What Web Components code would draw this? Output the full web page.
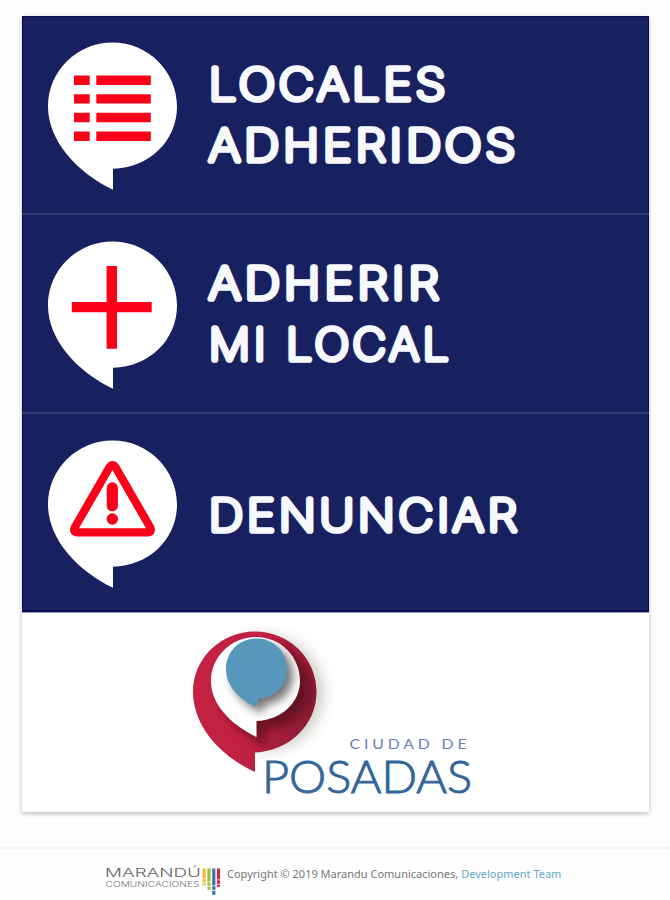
<!DOCTYPE html>
<html lang="es">
<head>
<meta charset="utf-8">
<title>Ciudad de Posadas</title>
<style>
	body {
		margin: 0;
		background: #fefefe;
		font-family: "Noto Sans", sans-serif;
	}
</style>
</head>
<body>
<main-card>
	<menu-item lines="LOCALES:2:240.5|ADHERIDOS:2:310.5">
		<svg slot="icon" width="129" height="148" viewBox="0 0 129 148" fill="#fb0019">
			<path d="M26 33.5h15.7v9.4H26zM48.3 33.5h54.5v9.4H48.3zM26 52.2h15.7v9.4H26zM48.3 52.2h54.5v9.4H48.3zM26 70.8h15.7v9.4H26zM48.3 70.8h54.5v9.4H48.3zM26 89.6h15.7v9.4H26zM48.3 89.6h54.5v9.4H48.3z"/>
		</svg>
	</menu-item>
	<menu-item lines="ADHERIR:2:234|MI LOCAL:2:243.5">
		<svg slot="icon" width="129" height="148" viewBox="0 0 129 148" fill="#fb0019">
			<path d="M58.6 25h10.4v36h34.7v10.2H69v36.5H58.6V71.2H23.8V61h34.8z"/>
		</svg>
	</menu-item>
	<menu-item lines="DENUNCIAR:2:312" last>
		<svg slot="icon" width="129" height="148" viewBox="0 0 129 148" fill="#fb0019">
			<path d="M61.3 27.5Q64.5 22.5 67.7 27.5L102 87Q104.5 92.3 99.5 92.3H29.5Q24.5 92.3 27 87Z" fill="none" stroke="#fb0019" stroke-width="8.2" stroke-linejoin="round"/>
			<rect x="58.7" y="42.3" width="11.2" height="29" rx="5.5"/>
			<circle cx="64.3" cy="79" r="5.7"/>
		</svg>
	</menu-item>
	<city-logo></city-logo>
</main-card>
<page-footer>
	<marandu-logo slot="logo"></marandu-logo>
	<span>Copyright © 2019 Marandu Comunicaciones,</span>
	<a slot="link">Development Team</a>
</page-footer>

<script>
class MainCard extends HTMLElement {
	constructor() {
		super();
		this.attachShadow({ mode: 'open' });
	}

	connectedCallback() {
		this.shadowRoot.innerHTML = `
		<style>
		:host {
			display: flex;
			flex-direction: column;
			width: 627px;
			margin: 16px 0 0 22px;
			background: #fff;
			box-shadow: 0 2px 4px rgba(0, 0, 0, .2), 0 1px 7px rgba(0, 0, 0, .07);
		}
		</style>
		<slot></slot>
		`;
	}
}

class MenuItem extends HTMLElement {
	constructor() {
		super();
		this.attachShadow({ mode: 'open' });
	}

	connectedCallback() {
		this.render();
	}

	// each line is "text:left:width"
	renderLines() {
		const lines = this.getAttribute('lines').split('|');
		const first = lines.length === 1 ? 117 : 83.5;
		return lines.map((line, i) => {
			const [text, left, width] = line.split(':');
			return `<text x="${left}" y="${first + i * 61}" textLength="${width}" lengthAdjust="spacingAndGlyphs">${text}</text>`;
		}).join('');
	}

	render() {
		this.shadowRoot.innerHTML = `
		<style>
		:host {
			display: flex;
			box-sizing: border-box;
			height: 199px;
			padding: 26px 0 0 26px;
			gap: 30px;
			background: #18215f;
			border-bottom: 2px solid #303b72;
			box-shadow: inset 1px 0 #080c54, inset -1px 0 #080c54;
		}
		:host(:first-child) {
			box-shadow: inset 1px 0 #080c54, inset -1px 0 #080c54, inset 0 1px #080c54;
		}
		:host([last]) {
			border-bottom: 1px solid #9ba0c0;
			box-shadow: inset 1px 0 #080c54, inset -1px 0 #080c54, inset 0 -2px #080c54;
		}
		.icon {
			display: grid;
			width: 129px;
			height: 148px;
		}
		.bubble,
		::slotted(svg) {
			grid-area: 1 / 1;
		}
		.label {
			margin-top: -26px;
			font-family: Inter, "Liberation Sans", sans-serif;
			font-size: 43px;
			font-weight: 100;
			letter-spacing: 3.8px;
			fill: #f8f9ff;
			stroke: #f8f9ff;
			stroke-width: 5.7px;
			stroke-linejoin: round;
			overflow: visible;
		}
		</style>
		<div class="icon">
			<svg class="bubble" width="129" height="148" viewBox="0 0 129 148">
				<path fill="#fff" d="M64.5 .5C100 .5 129 29 129 64.5C129 99 101 126 65 126.7V147.8C28 130 0 98 0 64.5C0 29 29 .5 64.5 .5z"/>
			</svg>
			<slot name="icon"></slot>
		</div>
		<svg class="label" width="330" height="199">${this.renderLines()}</svg>
		`;
	}
}

class CityLogo extends HTMLElement {
	constructor() {
		super();
		this.attachShadow({ mode: 'open' });
	}

	connectedCallback() {
		this.shadowRoot.innerHTML = `
		<style>
		:host {
			display: flex;
			justify-content: center;
			height: 199px;
		}
		svg {
			width: 627px;
			height: 199px;
		}
		text {
			font-family: Lato, sans-serif;
		}
		.city {
			font-size: 13px;
			letter-spacing: 3.2px;
			fill: #6a80ad;
		}
		.name {
			font-size: 45px;
			font-weight: 300;
			fill: #33669a;
			stroke: #33669a;
			stroke-width: 1px;
		}
		</style>
		<svg viewBox="22 613 627 199">
			<defs>
				<linearGradient id="red" x1="0" y1=".3" x2="1" y2=".5">
					<stop offset="0" stop-color="#c52243"/>
					<stop offset=".55" stop-color="#c02041"/>
					<stop offset="1" stop-color="#861b33"/>
				</linearGradient>
				<filter id="blur" x="-30%" y="-30%" width="160%" height="160%"><feGaussianBlur stdDeviation="7"/></filter>
				<filter id="soft" x="-30%" y="-30%" width="160%" height="160%"><feGaussianBlur stdDeviation="5"/></filter>
				<path id="outer" d="M255 631.5C289 631.5 316.5 658 316.5 692C316.5 725 289 751 255 752.5V772C218 755 193 724 193 692C193 658 221 631.5 255 631.5z"/>
				<path id="middle" d="M256 637C281 637 300 657 300 681C300 703 281 720 256.5 721V737C230 724 211 704 211 681C211 657 231 637 256 637z"/>
				<path id="inner" d="M256.5 638.5C274 638.5 287 652 287 669C287 685 275 698 258 698.5V702L255 706.5C239 699 226 686 226 669C226 652 239 638.5 256.5 638.5z"/>
				<clipPath id="inOuter"><use href="#outer"/></clipPath>
				<clipPath id="inMiddle"><use href="#middle"/></clipPath>
			</defs>
			<circle cx="266" cy="693" r="57" fill="#77705c" opacity=".36" filter="url(#blur)"/>
			<use href="#outer" fill="url(#red)"/>
			<g clip-path="url(#inOuter)"><use href="#middle" x="9" y="8" fill="#4b0718" opacity=".7" filter="url(#soft)"/></g>
			<use href="#middle" fill="#fefefe"/>
			<g clip-path="url(#inMiddle)"><use href="#inner" x="6" y="6" fill="#444" opacity=".75" filter="url(#soft)"/></g>
			<use href="#inner" fill="#5797bc"/>
			<text class="city" x="349.5" y="748.5" textLength="121" lengthAdjust="spacingAndGlyphs">CIUDAD DE</text>
			<text class="name" x="262" y="792.5" textLength="210" lengthAdjust="spacingAndGlyphs">POSADAS</text>
		</svg>
		`;
	}
}

class MaranduLogo extends HTMLElement {
	constructor() {
		super();
		this.attachShadow({ mode: 'open' });
	}

	connectedCallback() {
		this.shadowRoot.innerHTML = `
		<style>
		:host {
			display: block;
			height: 34px;
		}
		svg {
			display: block;
			font-family: Inter, "Liberation Sans", sans-serif;
			font-weight: 300;
		}
		</style>
		<svg width="116" height="34" viewBox="105 863 116 34">
			<text x="105" y="877" textLength="96" lengthAdjust="spacingAndGlyphs" font-size="11.5" fill="#666">MARANDÚ</text>
			<text x="105.5" y="886.5" textLength="94" lengthAdjust="spacingAndGlyphs" font-size="7" fill="#777">COMUNICACIONES</text>
			<g fill="none" stroke-width="3.2">
				<path stroke="#f3bd32" d="M204.2 868.5v9.5m0 .7v3.5m0 1v2"/>
				<path stroke="#a4bd35" d="M209 868.5v13m0 .7v3.5m0 1v3"/>
				<path stroke="#3b73ac" d="M213.8 868.5v17m0 .7v3.5m0 1v4"/>
				<path stroke="#c92b3c" d="M218.5 868.5v11m0 .7v3.5m0 1v2"/>
			</g>
		</svg>
		`;
	}
}

class PageFooter extends HTMLElement {
	constructor() {
		super();
		this.attachShadow({ mode: 'open' });
	}

	connectedCallback() {
		this.shadowRoot.innerHTML = `
		<style>
		:host {
			display: flex;
			align-items: flex-start;
			box-sizing: border-box;
			height: 53px;
			margin-top: 35px;
			padding: 14px 0 0 105px;
			border-top: 2px solid #f3f3f3;
			color: #777;
			font-size: 11px;
			line-height: 22px;
			white-space: nowrap;
		}
		.copy {
			display: flex;
			gap: 3px;
			margin-left: 6px;
		}
		::slotted(a) {
			color: #65a6cd;
		}
		</style>
		<slot name="logo"></slot>
		<div class="copy"><slot></slot><slot name="link"></slot></div>
		`;
	}
}

customElements.define('main-card', MainCard);
customElements.define('menu-item', MenuItem);
customElements.define('city-logo', CityLogo);
customElements.define('marandu-logo', MaranduLogo);
customElements.define('page-footer', PageFooter);
</script>
</body>
</html>
